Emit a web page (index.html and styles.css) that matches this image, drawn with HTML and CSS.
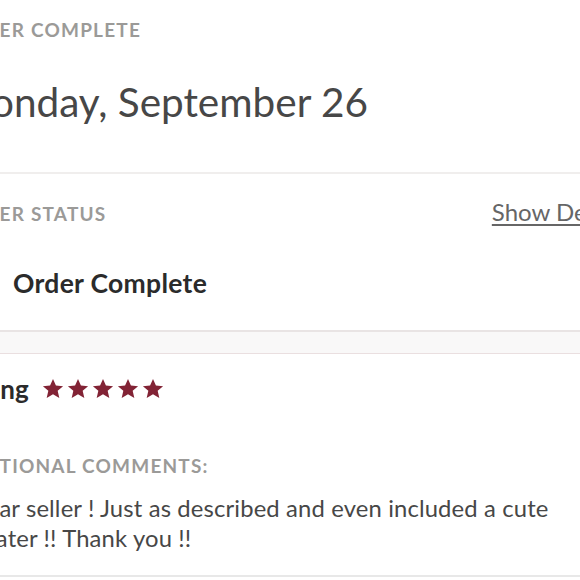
FILE: index.html
```html
<!DOCTYPE html>
<html lang="en">
<head>
<meta charset="utf-8">
<title>Order Complete</title>
<link rel="stylesheet" href="styles.css">
</head>
<body>
<main class="page">
  <section class="summary">
    <div class="label">ORDER COMPLETE</div>
    <h1 class="date">Monday, September 26</h1>
  </section>

  <section class="status">
    <div class="status-head">
      <div class="label">ORDER STATUS</div>
      <a class="details-link" href="#">Show Details</a>
    </div>
    <div class="status-row">
      <svg class="status-icon" width="36" height="36" viewBox="0 0 36 36" aria-hidden="true">
        <circle cx="18" cy="18" r="16" fill="none" stroke="#2b2b2b" stroke-width="2"/>
        <path d="M10 18.5l5.5 5.5L26 13" fill="none" stroke="#2b2b2b" stroke-width="2.4"/>
      </svg>
      <span class="status-text">Order Complete</span>
    </div>
  </section>

  <div class="band"></div>

  <section class="review">
    <div class="rating-row">
      <span class="rating-title">Rating</span>
      <span class="stars">
        <svg class="star" viewBox="0 0 24 24"><path d="M12 1l3.2 7.3 7.8.6-5.9 5.1 1.8 7.7L12 17.6l-6.9 4.1 1.8-7.7L1 8.9l7.8-.6z"/></svg>
        <svg class="star" viewBox="0 0 24 24"><path d="M12 1l3.2 7.3 7.8.6-5.9 5.1 1.8 7.7L12 17.6l-6.9 4.1 1.8-7.7L1 8.9l7.8-.6z"/></svg>
        <svg class="star" viewBox="0 0 24 24"><path d="M12 1l3.2 7.3 7.8.6-5.9 5.1 1.8 7.7L12 17.6l-6.9 4.1 1.8-7.7L1 8.9l7.8-.6z"/></svg>
        <svg class="star" viewBox="0 0 24 24"><path d="M12 1l3.2 7.3 7.8.6-5.9 5.1 1.8 7.7L12 17.6l-6.9 4.1 1.8-7.7L1 8.9l7.8-.6z"/></svg>
        <svg class="star" viewBox="0 0 24 24"><path d="M12 1l3.2 7.3 7.8.6-5.9 5.1 1.8 7.7L12 17.6l-6.9 4.1 1.8-7.7L1 8.9l7.8-.6z"/></svg>
      </span>
    </div>
    <div class="label comments-label">ADDITIONAL COMMENTS:</div>
    <p class="comment">Stellar seller ! Just as described and even included a cute sweater !! Thank you !!</p>
  </section>
</main>
</body>
</html>
```

FILE: styles.css
```css
* { box-sizing: border-box; }

html, body {
  margin: 0;
  padding: 0;
  background: #ffffff;
  overflow: hidden;
}

body {
  width: 580px;
  height: 580px;
  font-family: "Lato", "Open Sans", sans-serif;
  color: #4a4a4a;
}

.page {
  width: 680px;
  margin-left: -46px;
}

.label {
  font-size: 19px;
  line-height: 24px;
  font-weight: 700;
  letter-spacing: 1.2px;
  color: #9b9a98;
}

.summary {
  padding: 18px 12px 45px 0;
  border-bottom: 2px solid #f0eeed;
}

.date {
  margin: 35px 0 0;
  font-size: 40.5px;
  line-height: 50px;
  font-weight: 400;
  color: #474747;
}

.status {
  padding: 24px 5px 0 0;
  border-bottom: 2px solid #e9e4e4;
}

.status-head {
  display: flex;
  justify-content: space-between;
  align-items: baseline;
}

.details-link {
  font-size: 24px;
  line-height: 28px;
  color: #666666;
  text-decoration: underline;
  text-underline-offset: 3px;
  text-decoration-thickness: 1.5px;
}

.status-row {
  display: flex;
  align-items: center;
  gap: 23px;
  padding: 39px 0 29px;
}

.status-icon {
  flex: none;
}

.status-text {
  font-size: 26.5px;
  line-height: 32px;
  font-weight: 700;
  letter-spacing: 0.3px;
  color: #2b2b2b;
}

.band {
  height: 22px;
  background: #f9f8f8;
  border-bottom: 1px solid #eadfe0;
}

.review {
  padding: 19px 12px 22px 0;
  border-bottom: 2px solid #e8e8e8;
}

.rating-row {
  display: flex;
  align-items: center;
  gap: 13px;
}

.rating-title {
  font-size: 26px;
  line-height: 32px;
  font-weight: 700;
  color: #2b2b2b;
}

.stars {
  display: flex;
  gap: 3px;
}

.star {
  width: 22px;
  height: 22px;
  fill: #822335;
}

.comments-label {
  margin-top: 49px;
  margin-left: -7px;
}

.comment {
  margin: 15px 0 0;
  width: 640px;
  font-size: 23.8px;
  line-height: 30px;
  letter-spacing: 0.15px;
  color: #474747;
}
```
